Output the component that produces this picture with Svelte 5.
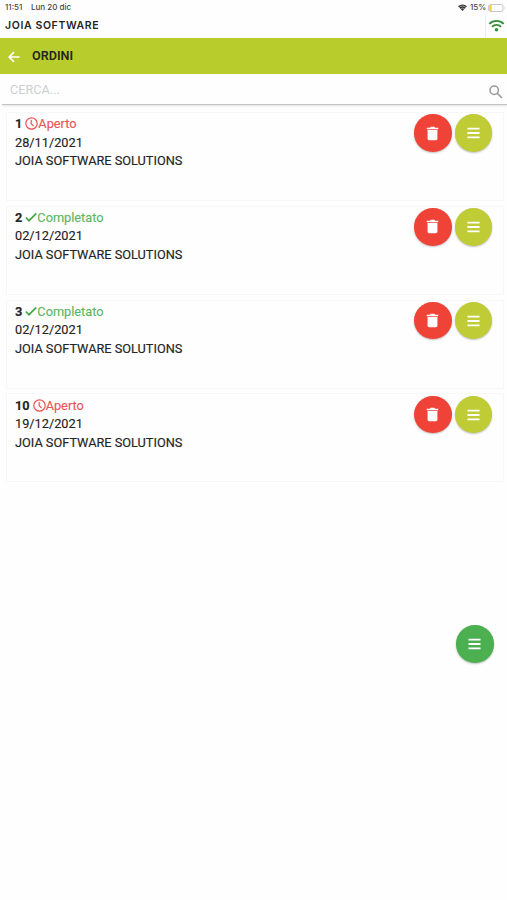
<script lang="ts">
type Order = {
    id: number;
    completed: boolean;
    date: string;
    customer: string;
};

let search = $state("");

const orders: Order[] = [
    { id: 1, completed: false, date: "28/11/2021", customer: "JOIA SOFTWARE SOLUTIONS" },
    { id: 2, completed: true, date: "02/12/2021", customer: "JOIA SOFTWARE SOLUTIONS" },
    { id: 3, completed: true, date: "02/12/2021", customer: "JOIA SOFTWARE SOLUTIONS" },
    { id: 10, completed: false, date: "19/12/2021", customer: "JOIA SOFTWARE SOLUTIONS" },
];
</script>

{#snippet wifi()}
    <svg class="wifi" viewBox="0 0 18 14">
        <path d="M1.2 5.2a11 11 0 0 1 15.6 0M4.1 8.4a7 7 0 0 1 9.8 0" />
        <circle cx="9" cy="11.5" r="1.9" />
    </svg>
{/snippet}

{#snippet menuIcon()}
    <svg class="bars" viewBox="0 0 14 12">
        <path d="M.5 1.4h13M.5 6h13M.5 10.6h13" />
    </svg>
{/snippet}

<div class="screen">
    <div class="status-bar">
        <span class="time">11:51</span>
        <span>Lun 20 dic</span>
        <div class="status-right">
            <svg class="status-wifi" viewBox="0 0 18 14">
                <path d="M0 4.4a13 13 0 0 1 18 0L9 14z" />
                <path class="gap" d="M2 7a10 10 0 0 1 14 0M5 10a6 6 0 0 1 8 0" />
            </svg>
            <span class="percent">15%</span>
            <svg class="battery" viewBox="0 0 18 8">
                <rect x=".5" y=".5" width="14.5" height="7" rx="2" />
                <path class="level" d="M2.5 1h1.2v6H2.5a1.3 1.3 0 0 1-1.3-1.3V2.3A1.3 1.3 0 0 1 2.5 1z" />
                <path class="cap" d="M16.2 2.7q1.6 1.3 0 2.6z" />
            </svg>
        </div>
    </div>

    <header>
        <h1>JOIA SOFTWARE</h1>
        <div class="connection">{@render wifi()}</div>
    </header>

    <nav>
        <button class="back" aria-label="Indietro">
            <svg viewBox="0 0 12 12">
                <path d="M11.6 6H1.2M6 1.1 1.1 6 6 10.9" />
            </svg>
        </button>
        <h2>ORDINI</h2>
    </nav>

    <div class="search">
        <input type="text" placeholder="CERCA..." bind:value={search} />
        <svg viewBox="0 0 14 14">
            <circle cx="5.2" cy="5.2" r="4.2" />
            <path d="m8.4 8.4 4.6 4.6" />
        </svg>
    </div>

    <main>
        {#each orders as order (order.id)}
            <article>
                <div class="details">
                    <div class="line">
                        <b>{order.id}</b>
                        <span class="state" class:completed={order.completed}>
                            {#if order.completed}
                                <svg class="check" viewBox="0 0 12 13">
                                    <path d="m.8 6.5 3.2 3.2 7.3-7.4" />
                                </svg>
                                Completato
                            {:else}
                                <svg viewBox="0 0 13 13">
                                    <circle cx="6.5" cy="6.5" r="5.7" />
                                    <path d="M6.2 3v3.8L8.6 9" />
                                </svg>
                                Aperto
                            {/if}
                        </span>
                    </div>
                    <div class="line">{order.date}</div>
                    <div class="line">{order.customer}</div>
                </div>
                <div class="actions">
                    <button class="round delete" aria-label="Elimina">
                        <svg class="trash" viewBox="0 0 14 15">
                            <path d="M.8 1.2h3.4L5 .3h4l.8.9h3.4v1.7H.8zM1.7 3.8h10.6v9.3a1.6 1.6 0 0 1-1.6 1.6H3.3a1.6 1.6 0 0 1-1.6-1.6z" />
                        </svg>
                    </button>
                    <button class="round" aria-label="Menu ordine">{@render menuIcon()}</button>
                </div>
            </article>
        {/each}
    </main>

    <button class="round fab" aria-label="Menu">{@render menuIcon()}</button>
</div>

<style>
    :global(body) {
        margin: 0;
        background-color: #fff;
    }

    .screen {
        position: relative;
        height: 900px;
        overflow: hidden;
        background-color: #fefefe;
        color: #242424;
        font-family: Roboto, sans-serif;
    }

    svg {
        display: block;
        flex: none;
        fill: none;
        stroke: currentColor;
    }

    button {
        padding: 0;
        border: 0;
        background: none;
        color: #fff;
    }

    .status-bar {
        display: flex;
        box-sizing: border-box;
        height: 15px;
        padding: 0 1px 0 5px;
        align-items: center;
        font: 500 8px/15px Inter, sans-serif;
        color: #444;
    }

    .time {
        width: 26px;
    }

    .status-right {
        display: flex;
        margin-left: auto;
        align-items: center;
    }

    .status-wifi {
        width: 9px;
        height: 7px;
        margin-right: 3px;
        fill: #333;
        stroke: none;
    }

    .status-wifi .gap {
        fill: none;
        stroke: #fefefe;
        stroke-width: 1;
    }

    .percent {
        width: 18px;
    }

    .battery {
        width: 18px;
        height: 8px;
        stroke: #bbb;
        stroke-width: 0.8;
    }

    .battery .level {
        fill: #f6d04d;
        stroke: none;
    }

    .battery .cap {
        fill: #bbb;
        stroke: none;
    }

    header {
        display: flex;
        height: 23px;
        justify-content: space-between;
    }

    h1 {
        margin: 0;
        padding-left: 5px;
        font: 600 10.5px/21px Inter, sans-serif;
        letter-spacing: 0.62px;
    }

    .connection {
        box-sizing: border-box;
        width: 22px;
        padding: 4px 0 0 2px;
        border-left: 1px solid #eee;
        color: #35903b;
    }

    .wifi {
        width: 17px;
        height: 13px;
        stroke-width: 2;
    }

    .wifi circle {
        fill: currentColor;
        stroke: none;
    }

    nav {
        display: flex;
        height: 36px;
        align-items: center;
        background-color: #b8cd2b;
    }

    .back {
        margin: 0 12px 0 8px;
    }

    .back svg {
        width: 12px;
        height: 12px;
        margin-top: 1px;
        stroke-width: 1.7;
    }

    h2 {
        margin: 0;
        font-size: 12.6px;
        font-weight: 600;
        line-height: 36px;
    }

    .search {
        display: flex;
        box-sizing: border-box;
        height: 31px;
        margin-left: 2px;
        padding: 1px 4px 0 8px;
        align-items: center;
        border-bottom: 1px solid #c4c4c4;
        box-shadow: 0 1px 2px #e2e2e2;
        clip-path: inset(0 0 -4px);
        color: #999;
    }

    .search input {
        flex: 1;
        min-width: 0;
        padding: 0;
        border: 0;
        outline: 0;
        background: none;
        font: 12.7px Roboto, sans-serif;
    }

    .search input::placeholder {
        color: #cecece;
    }

    .search svg {
        width: 14px;
        height: 14px;
        margin-top: 4px;
        stroke-width: 1.5;
    }

    main {
        display: flex;
        flex-direction: column;
        gap: 4.8px;
        padding: 7px 3px 0 6px;
    }

    article {
        display: flex;
        box-sizing: border-box;
        height: 89px;
        padding: 1.4px 11px 0 8px;
        justify-content: space-between;
        border: 1px solid #f7f7f7;
        border-radius: 1px;
    }

    .line {
        display: flex;
        height: 18.5px;
        align-items: center;
        font-size: 12.75px;
        line-height: 19px;
        -webkit-text-stroke: 0.15px currentColor;
    }

    .line b {
        margin-right: 3px;
        font-weight: 700;
    }

    .state {
        display: flex;
        align-items: center;
        color: #ea5455;
    }

    .state.completed {
        color: #5bb85f;
    }

    .state svg {
        width: 13px;
        height: 13px;
        stroke-width: 1.2;
    }

    .state .check {
        width: 12px;
        stroke: #46a54b;
        stroke-width: 1.7;
    }

    .actions {
        display: flex;
        gap: 3px;
    }

    .round {
        display: flex;
        width: 37.5px;
        height: 37.5px;
        align-items: center;
        justify-content: center;
        border-radius: 50%;
        background-color: #bfcc35;
        box-shadow: 0 1px 2px rgba(0, 0, 0, 0.25);
    }

    .delete {
        background-color: #f04337;
    }

    .trash {
        width: 13px;
        height: 15px;
        fill: currentColor;
        stroke: none;
    }

    .bars {
        width: 13px;
        height: 12px;
        stroke-width: 1.9;
    }

    .fab {
        position: absolute;
        top: 625px;
        right: 13.5px;
        background-color: #4caf50;
    }
</style>
